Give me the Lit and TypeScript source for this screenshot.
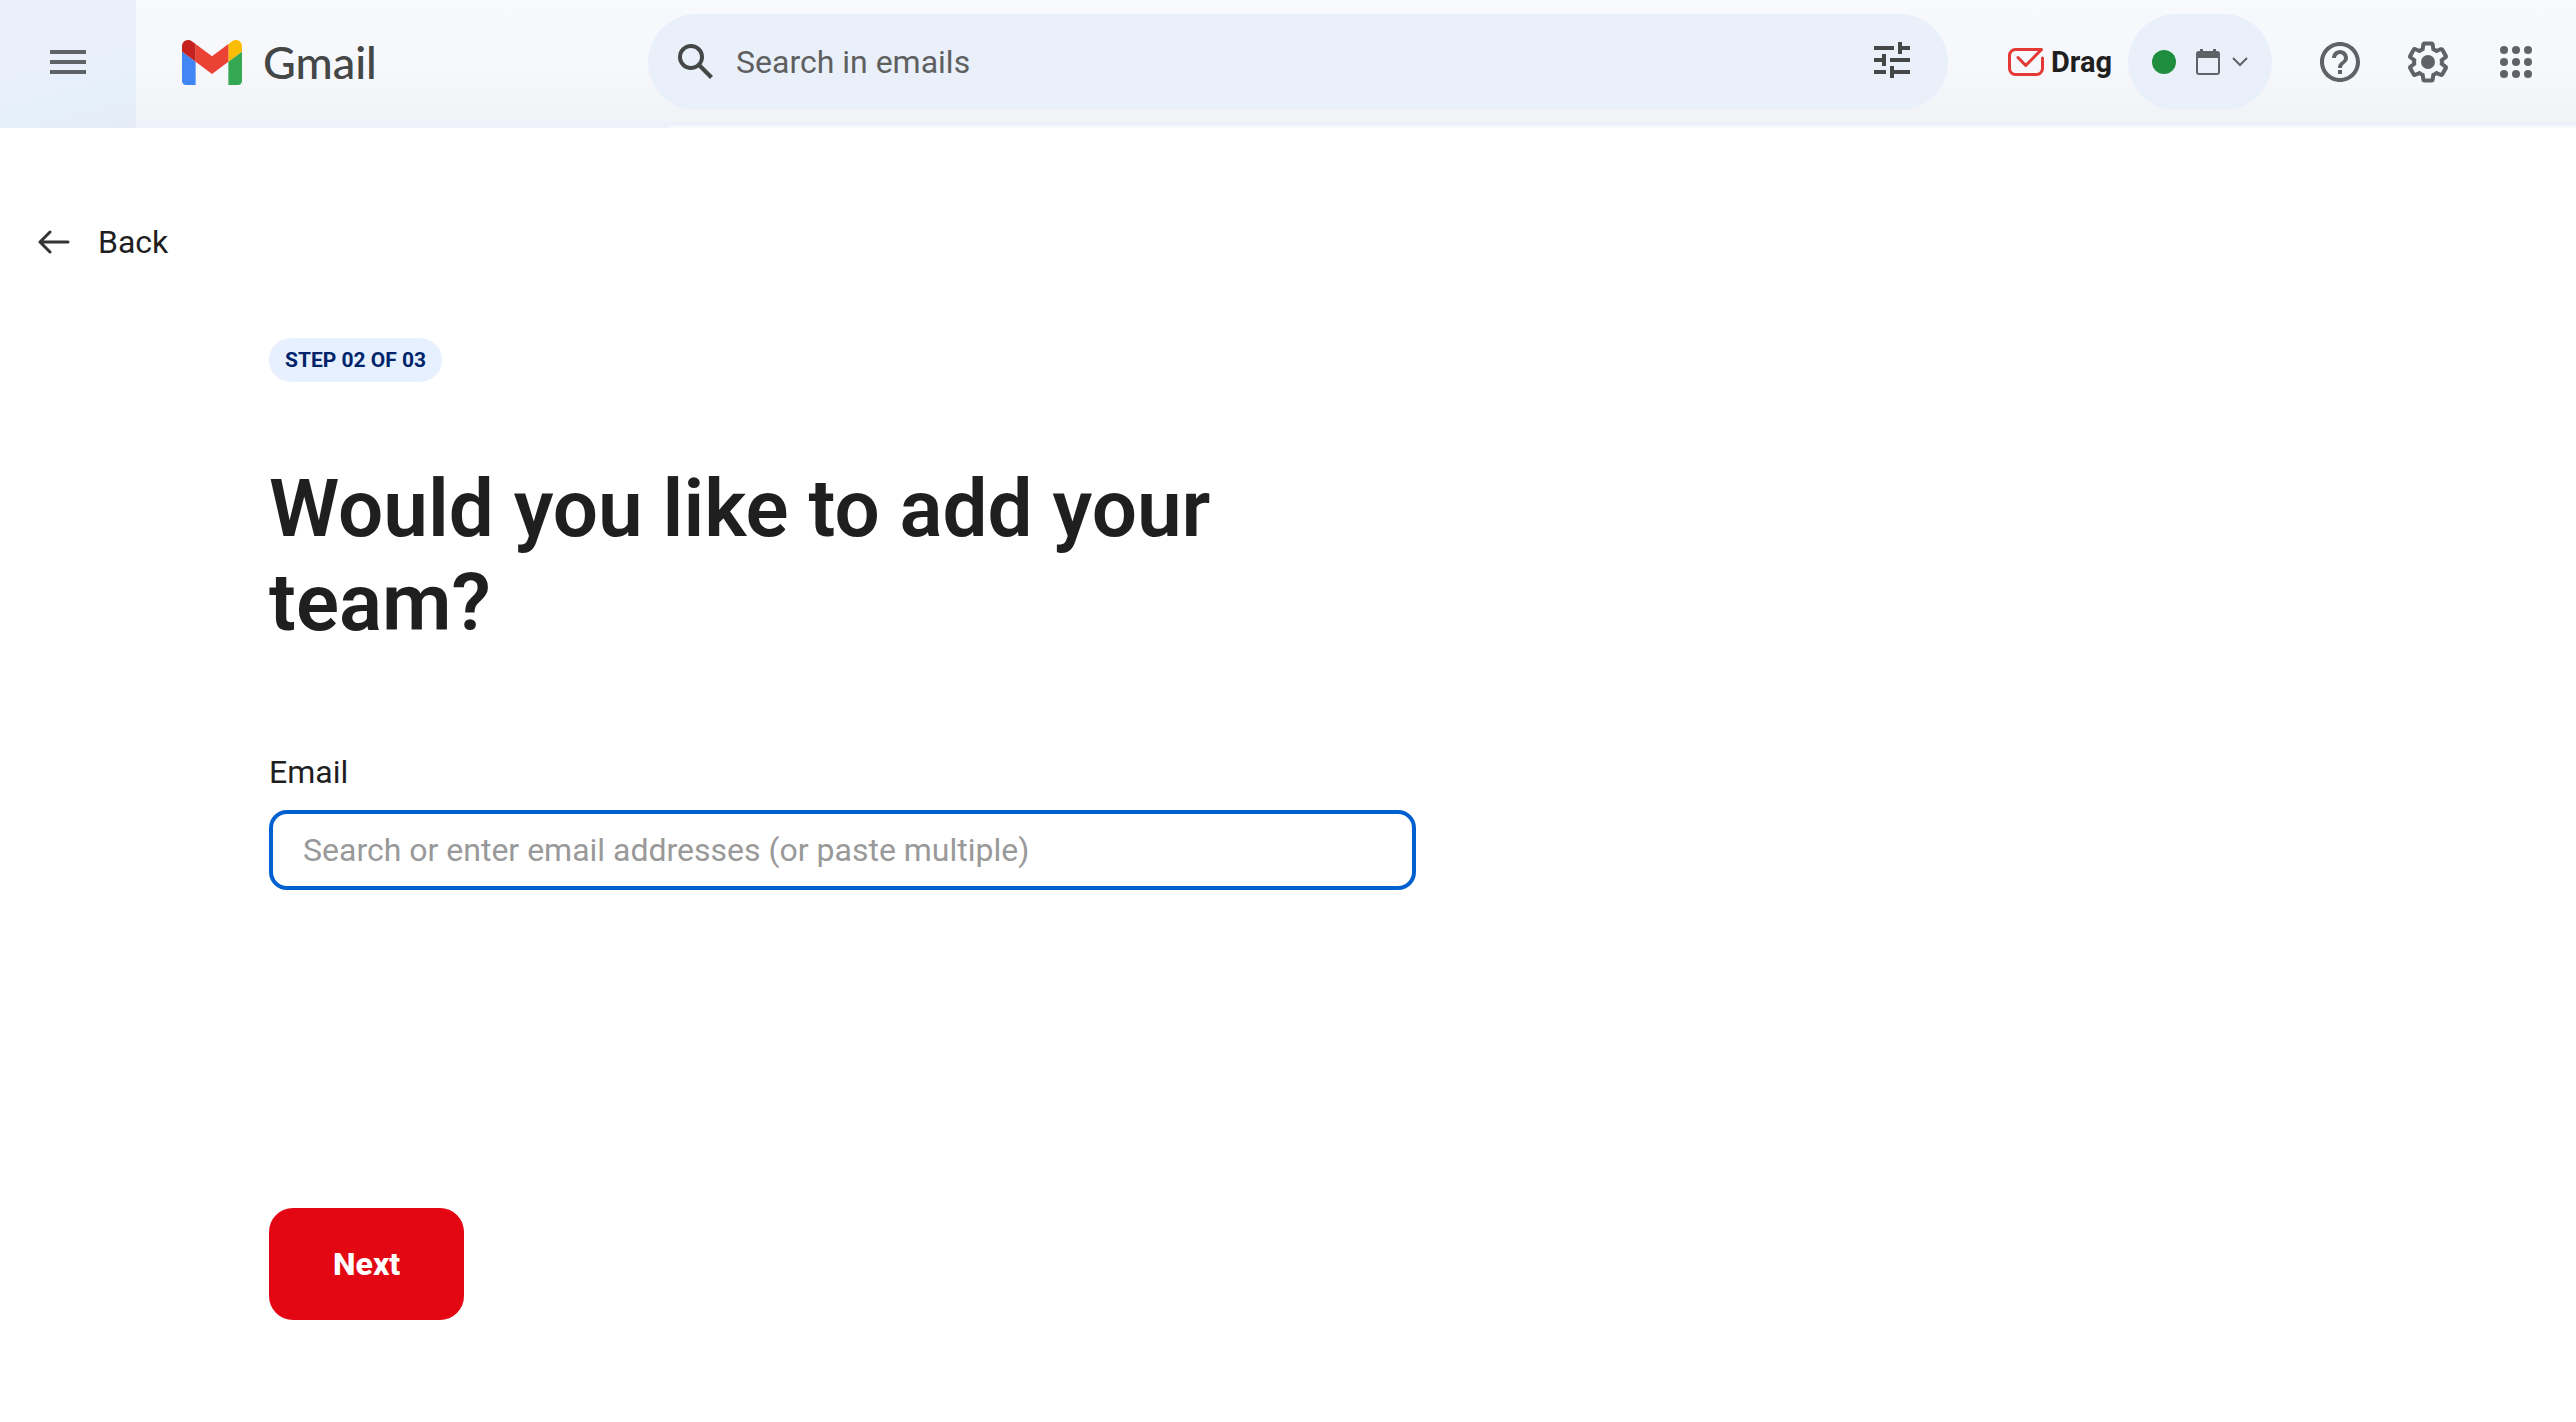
import { LitElement, html, css, svg } from "lit";
import { customElement } from "lit/decorators.js";

const icon = (size: number, body: unknown) =>
  html`<svg width=${size} height=${size} viewBox="0 0 24 24" fill="currentColor" aria-hidden="true">${body}</svg>`;

const menuIcon = icon(48, svg`<path d="M3 18h18v-2H3v2zm0-5h18v-2H3v2zm0-7v2h18V6H3z"/>`);
const searchIcon = icon(48, svg`<path d="M20.49 19l-5.73-5.73C15.53 12.2 16 10.91 16 9.5A6.5 6.5 0 1 0 9.5 16c1.41 0 2.7-.47 3.77-1.24L19 20.49 20.49 19zM5 9.5C5 7.01 7.01 5 9.5 5S14 7.01 14 9.5 11.99 14 9.5 14 5 11.99 5 9.5z"/>`);
const tuneIcon = html`<svg width="48" height="48" viewBox="0 1 24 24" fill="currentColor" aria-hidden="true"><path d="M3 17v2h6v-2H3zM3 5v2h10V5H3zm10 16v-2h8v-2h-8v-2h-2v6h2zM7 9v2H3v2h4v2h2V9H7zm14 4v-2H11v2h10zm-6-4h2V7h4V5h-4V3h-2v6z"/></svg>`;
const helpIcon = icon(48, svg`<path d="M11 18h2v-2h-2v2zm1-16C6.48 2 2 6.48 2 12s4.48 10 10 10 10-4.48 10-10S17.52 2 12 2zm0 18c-4.41 0-8-3.59-8-8s3.59-8 8-8 8 3.59 8 8-3.59 8-8 8zm0-14c-2.21 0-4 1.79-4 4h2c0-1.1.9-2 2-2s2 .9 2 2c0 2-3 1.75-3 5h2c0-2.25 3-2.5 3-5 0-2.21-1.79-4-4-4z"/>`);
const gearIcon = icon(48, svg`<path d="M13.85 22.25h-3.7c-.74 0-1.36-.54-1.45-1.27l-.27-1.89c-.27-.14-.53-.29-.79-.46l-1.8.72c-.7.26-1.47-.03-1.81-.65L2.2 15.53c-.35-.66-.2-1.44.36-1.88l1.53-1.19c-.01-.15-.02-.3-.02-.46 0-.15.01-.31.02-.46l-1.52-1.19c-.59-.45-.74-1.26-.37-1.88l1.85-3.19c.34-.62 1.11-.9 1.79-.63l1.81.73c.26-.17.52-.32.78-.46l.27-1.91c.09-.7.71-1.25 1.44-1.25h3.7c.74 0 1.36.54 1.45 1.27l.27 1.89c.27.14.53.29.79.46l1.8-.72c.71-.26 1.48.03 1.82.65l1.84 3.18c.36.66.2 1.44-.36 1.88l-1.52 1.19c.01.15.02.3.02.46s-.01.31-.02.46l1.52 1.19c.56.45.72 1.23.37 1.86l-1.86 3.22c-.34.62-1.11.9-1.8.63l-1.8-.72c-.26.17-.52.32-.78.46l-.27 1.91c-.1.68-.72 1.22-1.46 1.22zm-3.23-2h2.76l.37-2.55.53-.22c.44-.18.88-.44 1.34-.78l.45-.34 2.38.96 1.38-2.4-2.03-1.58.07-.56c.03-.26.06-.51.06-.78s-.03-.53-.06-.78l-.07-.56 2.03-1.58-1.39-2.4-2.39.96-.45-.35c-.42-.32-.87-.58-1.33-.77l-.52-.22-.37-2.55h-2.76l-.37 2.55-.53.21c-.44.19-.88.44-1.34.79l-.45.33-2.38-.95-1.39 2.39 2.03 1.58-.07.56a7 7 0 0 0-.06.79c0 .26.02.53.06.78l.07.56-2.03 1.58 1.38 2.4 2.39-.96.45.35c.43.33.86.58 1.33.77l.53.22.38 2.55z"/><circle cx="12" cy="12" r="3.5"/>`);
const appsIcon = icon(48, svg`${[6, 12, 18].map((y) => [6, 12, 18].map((x) => svg`<circle cx=${x} cy=${y} r="2"/>`))}`);

const gmailMark = html`<svg width="60" height="45" viewBox="52 42 88 66" aria-hidden="true">
  <path fill="#4285f4" d="M58 108h14V74L52 59v43c0 3.32 2.69 6 6 6"/>
  <path fill="#34a853" d="M120 108h14c3.32 0 6-2.69 6-6V59l-20 15"/>
  <path fill="#fbbc04" d="M120 48v26l20-15v-8c0-7.42-8.47-11.65-14.4-7.2"/>
  <path fill="#ea4335" d="M72 74V48l24 18 24-18v26L96 92"/>
  <path fill="#c5221f" d="M52 51v8l20 15V48l-5.600-4.200c-5.940-4.450-14.400-.220-14.400 7.200"/>
</svg>`;

const dragMark = html`<svg width="36" height="30" viewBox="0 0 36 30" fill="none" stroke="#e53935" stroke-width="3" stroke-linecap="round" stroke-linejoin="round" aria-hidden="true">
  <path d="M34.500 11V21.500a6 6 0 0 1-6 6H7.500a6 6 0 0 1-6-6V8.500a6 6 0 0 1 6-6H33.500L17.700 18.500 10 10.500"/>
</svg>`;

const calendarIcon = html`<svg width="24" height="26" viewBox="0 0 24 26" aria-hidden="true">
  <path fill="#5f6368" fill-rule="evenodd" d="M4 0h3v2h10V0h3v2h1a3 3 0 0 1 3 3v18a3 3 0 0 1-3 3H3a3 3 0 0 1-3-3V5a3 3 0 0 1 3-3h1zM2 9v14a1 1 0 0 0 1 1h18a1 1 0 0 0 1-1V9z"/>
</svg>`;

const chevronIcon = html`<svg width="16" height="10" viewBox="0 0 16 10" fill="none" stroke="#5f6368" stroke-width="2" aria-hidden="true"><path d="M1 1l7 7 7-7"/></svg>`;

const arrowIcon = html`<svg width="32" height="24" viewBox="0 0 32 24" fill="none" stroke="#333" stroke-width="3" stroke-linecap="round" stroke-linejoin="round" aria-hidden="true"><path d="M30 12H2M12 2L2 12l10 10"/></svg>`;

@customElement("app-header")
export class AppHeader extends LitElement {
  static styles = css`
    :host {
      display: flex;
      align-items: stretch;
      height: 128px;
      background:
        linear-gradient(#f8f9fd, #f8f9fd) 670px 126px / 100% 2px no-repeat,
        linear-gradient(#f8f9fd 0, #f7f8fc 60px, #f5f6fa 90px, #f2f3f6 112px, #f2f3f6 121px, #eef1f9 122px);
      color: #5f6368;
      font-family: Roboto, sans-serif;
    }
    button, a {
      display: flex;
      align-items: center;
      justify-content: center;
      flex: none;
      padding: 0;
      border: 0;
      background: none;
      color: inherit;
      font: inherit;
      text-decoration: none;
      cursor: pointer;
    }
    svg { display: block; flex: none; }
    .menu {
      width: 136px;
      padding-bottom: 4px;
      background: linear-gradient(165deg, #e9f0fb 0, #e9f0fb 50%, #e5f0fa 75%, #e5ecf7 95%);
    }
    .bar {
      display: flex;
      flex: 1;
      align-items: center;
      min-width: 0;
      padding: 0 36px 4px 0;
    }
    .brand {
      width: 466px;
      padding-left: 46px;
      justify-content: flex-start;
      gap: 21px;
      color: #444746;
      font-family: Lato, sans-serif;
      font-size: 45px;
      font-weight: 500;
      line-height: 56px;
    }
    .search {
      display: flex;
      align-items: center;
      flex: 1;
      min-width: 0;
      height: 96px;
      padding: 0 32px 0 24px;
      box-sizing: border-box;
      border-radius: 48px;
      background: #e9f0fa;
      color: #444746;
    }
    .query {
      flex: 1;
      min-width: 0;
      padding: 0;
      margin: 0 16px;
      border: 0;
      outline: 0;
      background: none;
      font: 32px/40px Roboto, sans-serif;
      color: #444746;
    }
    .query::placeholder { color: #5f5f5f; opacity: 1; }
    .drag {
      gap: 7px;
      margin: 0 16px 0 60px;
      color: #1f1f1f;
      font-size: 29px;
      font-weight: 700;
      line-height: 36px;
    }
    .status {
      width: 144px;
      height: 96px;
      border-radius: 48px;
      background: #e9f0fa;
    }
    .dot {
      width: 24px;
      height: 24px;
      margin-right: 20px;
      border-radius: 50%;
      background: #1e8e3e;
    }
    .chevron { margin-left: 12px; }
    .tools {
      display: flex;
      gap: 40px;
      margin-left: 44px;
    }
  `;

  render() {
    return html`
      <button class="menu" aria-label="Main menu">${menuIcon}</button>
      <div class="bar">
        <a class="brand" href="#">${gmailMark}<span>Gmail</span></a>
        <form class="search" role="search">
          <button type="button" aria-label="Search">${searchIcon}</button>
          <input class="query" type="text" aria-label="Search in emails" placeholder="Search in emails" />
          <button type="button" aria-label="Search options">${tuneIcon}</button>
        </form>
        <button class="drag">${dragMark}<span>Drag</span></button>
        <button class="status" aria-label="Status">
          <span class="dot"></span>${calendarIcon}<span class="chevron">${chevronIcon}</span>
        </button>
        <nav class="tools">
          <button aria-label="Support">${helpIcon}</button>
          <button aria-label="Settings">${gearIcon}</button>
          <button aria-label="Apps">${appsIcon}</button>
        </nav>
      </div>
    `;
  }
}

@customElement("app-root")
export class AppRoot extends LitElement {
  static styles = css`
    :host {
      display: block;
      min-height: 100vh;
      background: #fff;
      color: #1f1f1f;
      font: 32px/40px Roboto, sans-serif;
    }
    svg { display: block; }
    .back {
      display: flex;
      align-items: center;
      gap: 28px;
      margin: 94px 0 0 38px;
      padding: 0;
      border: 0;
      background: none;
      color: inherit;
      font: inherit;
      cursor: pointer;
    }
    .content {
      display: flex;
      flex-direction: column;
      align-items: flex-start;
      max-width: 1147px;
      margin: 76px 24px 0 269px;
    }
    .badge {
      padding: 0 16px;
      border-radius: 22px;
      background: #e6f0ff;
      color: #00246b;
      font-size: 21px;
      font-weight: 700;
      line-height: 44px;
    }
    h1 {
      max-width: 1000px;
      margin: 80px 0 0;
      font-size: 80px;
      font-weight: 600;
      line-height: 94px;
    }
    label { margin-top: 102px; }
    .email {
      width: 100%;
      height: 80px;
      margin: 18px 0 0;
      padding: 0 30px;
      box-sizing: border-box;
      border: 4px solid #0060d0;
      border-radius: 18px;
      outline: 0;
      background: #fff;
      color: #1f1f1f;
      font: inherit;
    }
    .email::placeholder { color: #999; opacity: 1; }
    .next {
      height: 112px;
      margin: 318px 0 0;
      padding: 0 64px;
      border: 0;
      border-radius: 24px;
      background: #e30613;
      color: #fff;
      font: 800 32px/40px Roboto, sans-serif;
      cursor: pointer;
    }
  `;

  render() {
    return html`
      <app-header></app-header>
      <main>
        <button class="back">${arrowIcon}<span>Back</span></button>
        <section class="content">
          <span class="badge">STEP 02 OF 03</span>
          <h1>Would you like to add your team?</h1>
          <label for="email">Email</label>
          <input class="email" id="email" type="text" placeholder="Search or enter email addresses (or paste multiple)" />
          <button class="next">Next</button>
        </section>
      </main>
    `;
  }
}
